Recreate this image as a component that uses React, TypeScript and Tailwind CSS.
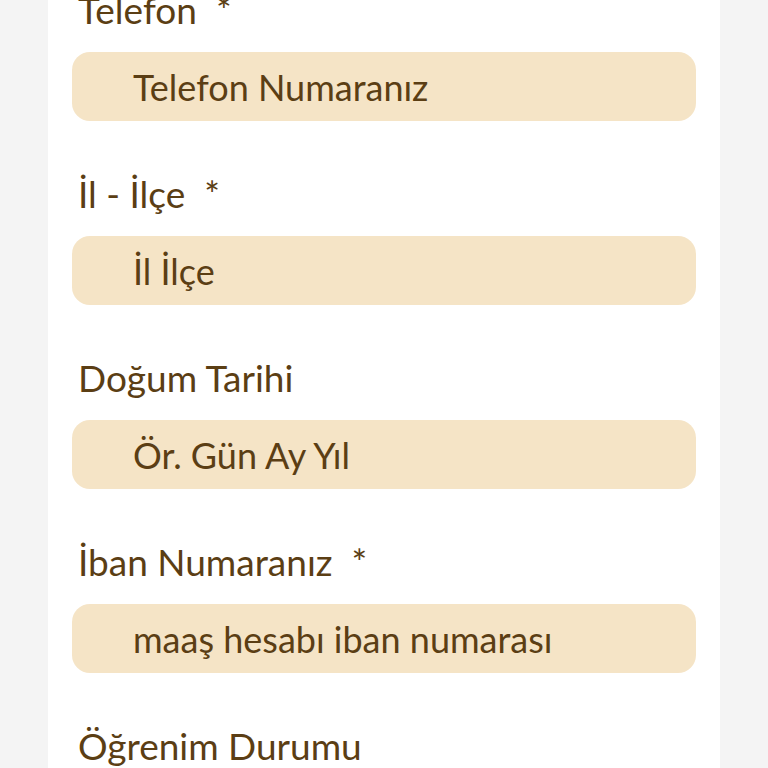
const fields = [
  { label: "Telefon  *", placeholder: "Telefon Numaranız" },
  { label: "İl - İlçe  *", placeholder: "İl İlçe" },
  { label: "Doğum Tarihi", placeholder: "Ör. Gün Ay Yıl" },
  { label: "İban Numaranız  *", placeholder: "maaş hesabı iban numarası" },
  { label: "Öğrenim Durumu", placeholder: "" },
];

export default function App() {
  return (
    <div className="h-[768px] overflow-hidden bg-[#f4f4f4] px-[48px] font-['Lato',sans-serif] text-[#5b3e14]">
      <div className="flow-root h-full bg-white px-[24px]">
        <div className="-mt-[10px] flex flex-col">
          {fields.map((f) => (
            <div key={f.label} className="flex flex-col">
              <label className="mb-[22px] whitespace-pre pl-[6px] text-[37px] leading-[40px]">{f.label}</label>
              {f.placeholder && (
                <input
                  className="mb-[53px] h-[69px] w-full rounded-[18px] bg-[#f5e4c6] pl-[61px] text-[36px] outline-none placeholder:text-[#5b3e14]"
                  type="text"
                  placeholder={f.placeholder}
                />
              )}
            </div>
          ))}
        </div>
      </div>
    </div>
  );
}
